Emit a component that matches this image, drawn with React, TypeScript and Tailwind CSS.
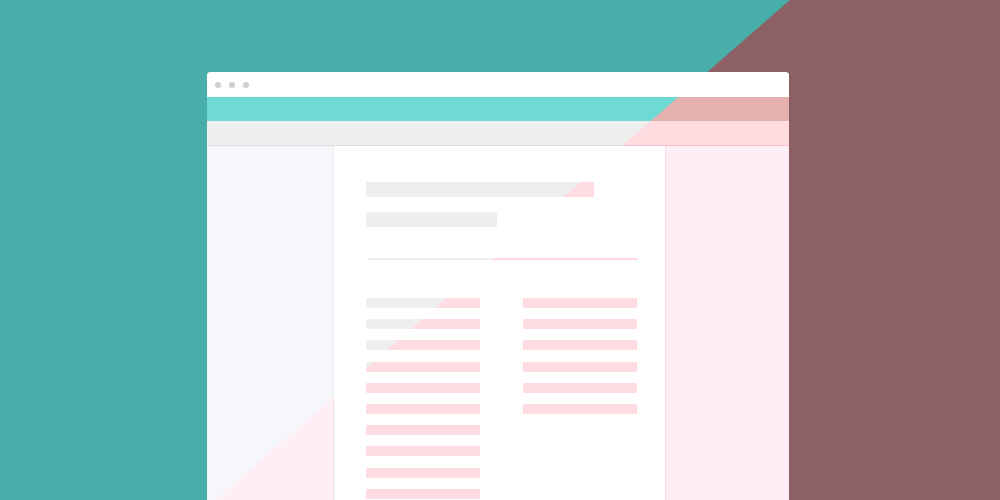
import React from "react";

const BAR =
  "bg-[linear-gradient(139deg,#efefef_517.8px,#ffdce1_518.8px)] bg-fixed";

export default function App() {
  const leftBars = Array.from({ length: 10 });
  const rightBars = Array.from({ length: 6 });
  return (
    <div className="w-[1000px] h-[500px] overflow-hidden pt-[72px] pl-[207px] bg-[linear-gradient(139deg,#47aea9_517.8px,#8d6066_518.8px)] bg-fixed">
      <div className="w-[582px] h-[460px] flex flex-col rounded-t-[4px] overflow-hidden bg-white">
        <div className="h-[25px] flex items-center gap-[8px] pl-[8px] bg-white">
          <span className="w-[6px] h-[6px] rounded-full bg-[#cfcfcf]" />
          <span className="w-[6px] h-[6px] rounded-full bg-[#cfcfcf]" />
          <span className="w-[6px] h-[6px] rounded-full bg-[#cfcfcf]" />
        </div>
        <div className="h-[24px] bg-[linear-gradient(139deg,#6fd9d3_517.8px,#e4b1ae_518.8px)] bg-fixed" />
        <div className="h-[24px] bg-[linear-gradient(139deg,#efefef_517.8px,#ffdade_518.8px)] bg-fixed" />
        <div className="h-[1px] bg-[linear-gradient(139deg,#e0e0e0_517.8px,#f6c4ca_518.8px)] bg-fixed shadow-[0_1px_2px_rgba(0,0,0,0.05)]" />
        <div className="flex flex-1">
          <div className="w-[126px] bg-[linear-gradient(139deg,#f5f7fa_517.8px,#feeef5_518.8px)] bg-fixed" />
          <div className="w-[1px] bg-[linear-gradient(139deg,#e7e9ec_517.8px,#fadbe3_518.8px)] bg-fixed" />
          <div className="w-[331px] bg-white pl-[32px] pt-[36px]">
            <div className={`w-[228px] h-[15px] ${BAR}`} />
            <div className={`mt-[15px] w-[131px] h-[15px] ${BAR}`} />
            <div className="mt-[31px] ml-[2px] w-[270px] h-[2px] bg-[linear-gradient(139deg,#f0f0f0_517.8px,#ffd9df_518.8px)] bg-fixed" />
            <div className="mt-[38px] flex gap-[43px]">
              <div className="flex flex-col gap-[11.2px]">
                {leftBars.map((_, i) => (
                  <div key={i} className={`w-[114px] h-[10px] ${BAR}`} />
                ))}
              </div>
              <div className="flex flex-col gap-[11.2px]">
                {rightBars.map((_, i) => (
                  <div key={i} className="w-[114px] h-[10px] bg-[#ffdce1]" />
                ))}
              </div>
            </div>
          </div>
          <div className="w-[1px] bg-[#ffdbe4]" />
          <div className="flex-1 bg-[#feeef5]" />
        </div>
      </div>
    </div>
  );
}
